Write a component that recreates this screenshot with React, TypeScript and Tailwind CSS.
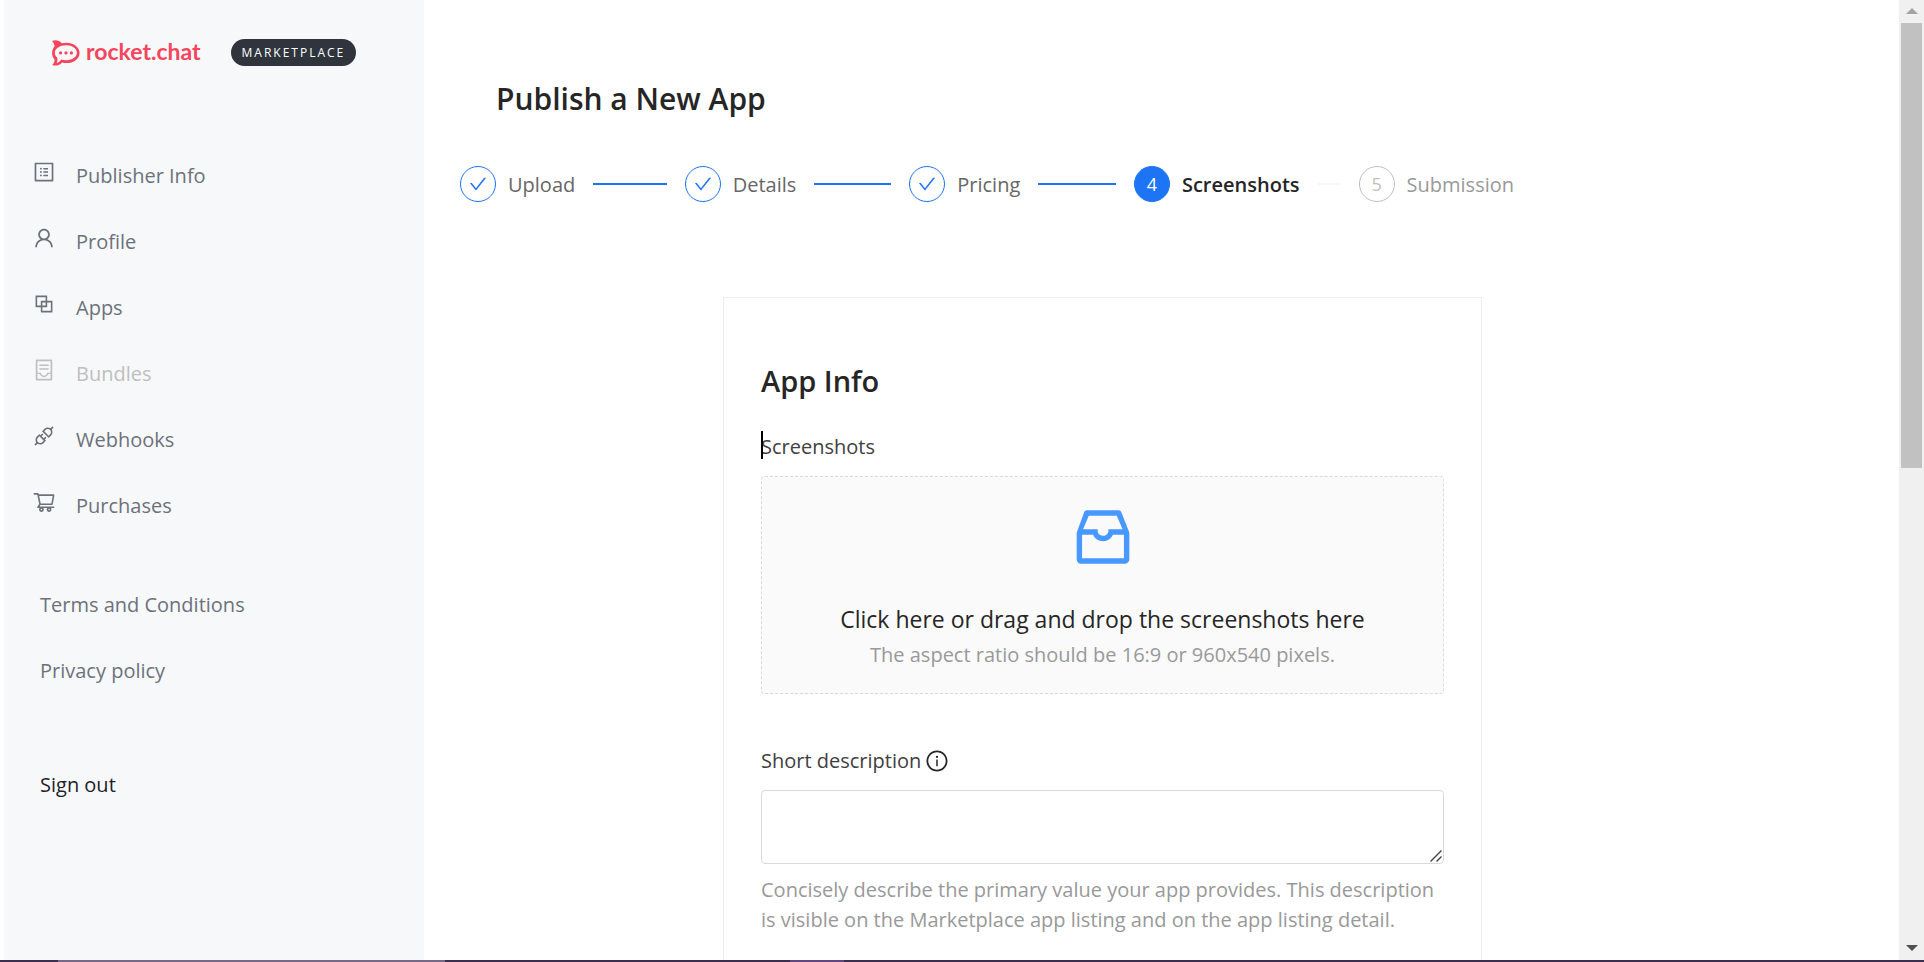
import type { ReactNode } from "react";
import type { IconType } from "react-icons";
import {
  AiOutlineApi,
  AiOutlineBlock,
  AiOutlineCheck,
  AiOutlineContainer,
  AiOutlineInbox,
  AiOutlineInfoCircle,
  AiOutlineProfile,
  AiOutlineShoppingCart,
  AiOutlineUser,
} from "react-icons/ai";

const navItems: { label: string; icon: IconType; disabled?: boolean }[] = [
  { label: "Publisher Info", icon: AiOutlineProfile },
  { label: "Profile", icon: AiOutlineUser },
  { label: "Apps", icon: AiOutlineBlock },
  { label: "Bundles", icon: AiOutlineContainer, disabled: true },
  { label: "Webhooks", icon: AiOutlineApi },
  { label: "Purchases", icon: AiOutlineShoppingCart },
];

type StepStatus = "done" | "current" | "waiting";

const steps: { label: string; status: StepStatus }[] = [
  { label: "Upload", status: "done" },
  { label: "Details", status: "done" },
  { label: "Pricing", status: "done" },
  { label: "Screenshots", status: "current" },
  { label: "Submission", status: "waiting" },
];

const circleStyles: Record<StepStatus, string> = {
  done: "border-[#1d74f5] text-[#1d74f5]",
  current: "border-[#1d74f5] bg-[#1d74f5] text-white",
  waiting: "border-[#bfbfbf] text-[#bfbfbf]",
};

const labelStyles: Record<StepStatus, string> = {
  done: "text-[#666666]",
  current: "font-semibold text-[#262626]",
  waiting: "text-[#999999]",
};

function RocketMark() {
  return (
    <svg viewBox="0 0 28 26" className="h-[26px] w-7 shrink-0" aria-hidden="true">
      <path
        fill="#f5455c"
        d="M0 .9C3.6-.3 7.400 .5 9.600 3.200 11.200 2.900 12.600 2.700 14.200 2.700 21.800 2.700 27.600 7.100 27.600 12.900S21.800 23.100 14.200 23.100C12.700 23.100 11.300 22.900 10 22.500 7.700 25.600 3.700 26.300 .2 25 2 23.300 2.700 21.400 2.400 19.300 .9 17.500 .1 15.300 .1 12.900 .1 10.500 1 8.300 2.500 6.600 2.600 4.500 1.800 2.500 0 .9Z"
      />
      <path
        fill="#f7f8fa"
        d="M14.200 5.300C20.200 5.300 24.900 8.600 24.900 12.800S20.200 20.200 14.200 20.200C12.400 20.200 10.700 19.900 9.200 19.400 8 21.100 6.700 22.300 4.700 22.900 5.600 21.200 5.600 19.500 5.200 17.600 3.500 16.100 2.800 14.600 2.800 12.700 2.800 8.600 8 5.300 14.200 5.300Z"
      />
      <g fill="#f5455c">
        <circle cx="8.600" cy="12.900" r="1.600" />
        <circle cx="14" cy="12.900" r="1.600" />
        <circle cx="19.400" cy="12.900" r="1.600" />
      </g>
    </svg>
  );
}

function Sidebar() {
  return (
    <aside className="w-[420px] shrink-0 bg-[#f7f8fa] text-xl leading-[30px] text-[#6c727a]">
      <div className="flex items-center pt-[39px] pl-12">
        <a href="#home" className="flex items-center gap-1.5 text-[#f5455c]">
          <RocketMark />
          <span className="pb-1 font-[Lato,sans-serif] text-[23px] leading-[22px] font-bold">rocket.chat</span>
        </a>
        <span className="ml-[30px] rounded-full bg-[#2f343d] px-[11px] text-xs leading-[27px] tracking-[2px] text-white">
          MARKETPLACE
        </span>
      </div>
      <nav aria-label="Main" className="pt-[94px]">
        <ul className="flex flex-col gap-9 pl-7">
          {navItems.map(({ label, icon: Icon, disabled }) => (
            <li key={label}>
              <a
                href={"#" + label.toLowerCase().replace(" ", "-")}
                aria-disabled={disabled}
                className={disabled ? "flex gap-5 text-[#bfbfbf]" : "flex gap-5"}
              >
                <Icon className="size-6 shrink-0" />
                <span className="pt-1 pb-0.5 leading-6">{label}</span>
              </a>
            </li>
          ))}
        </ul>
        <ul className="flex flex-col gap-9 pt-[70px] pl-9">
          <li><a href="#terms">Terms and Conditions</a></li>
          <li><a href="#privacy">Privacy policy</a></li>
        </ul>
      </nav>
      <button type="button" className="mt-[84px] ml-9 text-[#1f2329]">Sign out</button>
    </aside>
  );
}

function Stepper() {
  return (
    <ol className="flex max-w-[1054px] text-xl leading-[34px]">
      {steps.map(({ label, status }, index) => (
        <li
          key={label}
          aria-current={status === "current" ? "step" : undefined}
          className={index < steps.length - 1 ? "flex min-w-0 flex-1 items-center" : "flex items-center"}
        >
          <span
            className={`mr-3 flex size-9 shrink-0 items-center justify-center rounded-full border text-lg ${circleStyles[status]}`}
          >
            {status === "done" ? <AiOutlineCheck className="size-5" /> : index + 1}
          </span>
          <span className={`pt-0.5 ${labelStyles[status]}`}>{label}</span>
          {index < steps.length - 1 && (
            <span
              className={status === "done" ? "mx-[18px] h-0.5 flex-1 bg-[#1d74f5]" : "mx-[18px] h-0.5 flex-1 bg-[#f7f7f7]"}
            />
          )}
        </li>
      ))}
    </ol>
  );
}

function Hint({ children }: { children: ReactNode }) {
  return <p className="text-[#999999]">{children}</p>;
}

function AppInfoCard() {
  return (
    <form className="mt-[95px] ml-[263px] max-w-[759px] border border-[#ebedf0] px-[37px] pt-[62px] pb-40 text-xl leading-[30px] text-[#404040]">
      <h2 className="text-[29px] leading-[42px] font-semibold text-[#262626]">App Info</h2>
      <div className="relative mt-[30px]">
        <label htmlFor="screenshots">Screenshots</label>
        <span className="absolute -top-px left-0 h-7 w-0.5 bg-black" />
      </div>
      <button
        id="screenshots"
        type="button"
        className="mt-3.5 flex w-full flex-col items-center rounded border border-dashed border-[#d9d9d9] bg-[#fafafa] pt-6 pb-5"
      >
        <AiOutlineInbox className="size-[72px] text-[#4799ff]" />
        <span className="mt-7 text-[23px] leading-9 text-[#262626]">
          Click here or drag and drop the screenshots here
        </span>
        <span className="leading-9 text-[#999999]">The aspect ratio should be 16:9 or 960x540 pixels.</span>
      </button>
      <div className="mt-[52px] flex items-center gap-1">
        <label htmlFor="short-description">Short description</label>
        <AiOutlineInfoCircle className="size-6 text-[#262626]" />
      </div>
      <div className="relative mt-3.5 mb-[11px]">
        <textarea
          id="short-description"
          className="block h-[74px] w-full resize-none rounded border border-[#d9d9d9] bg-white px-4 py-2 outline-none"
        />
        <svg
          viewBox="0 0 12 12"
          className="pointer-events-none absolute right-0.5 bottom-0.5 size-3"
          fill="none"
          stroke="#404040"
          strokeWidth="1.4"
          aria-hidden="true"
        >
          <path d="M.5 11.500l11-11M6.500 11.500l5-5" />
        </svg>
      </div>
      <Hint>
        Concisely describe the primary value your app provides. This description is visible on the Marketplace app
        listing and on the app listing detail.
      </Hint>
    </form>
  );
}

function ScrollTrack() {
  return (
    <div className="flex w-[25px] shrink-0 flex-col items-center bg-[#f0f0f0]" aria-hidden="true">
      <svg viewBox="0 0 12 6" className="mt-2 h-1.5 w-3 shrink-0 fill-[#a3a3a3]">
        <path d="M6 0l6 6H0z" />
      </svg>
      <div className="mt-[9px] h-[445px] w-[21px] shrink-0 bg-[#c1c1c1]" />
      <svg viewBox="0 0 12 6" className="mt-auto mb-[9px] h-1.5 w-3 shrink-0 fill-[#505050]">
        <path d="M0 0h12L6 6z" />
      </svg>
    </div>
  );
}

export default function App() {
  return (
    <div className="flex h-screen flex-col bg-white font-['Open_Sans','Noto_Sans',sans-serif]">
      <div className="flex min-h-0 flex-1 pl-1">
        <Sidebar />
        <main className="min-w-0 flex-1 overflow-hidden px-9 pt-[75px]">
          <h1 className="pl-9 text-[30px] leading-[48px] font-semibold text-[#262626]">Publish a New App</h1>
          <div className="pt-[43px]">
            <Stepper />
          </div>
          <AppInfoCard />
        </main>
        <ScrollTrack />
      </div>
      <div className="flex h-0.5 shrink-0 bg-[#3b2e4f] pl-[58px]">
        <span className="w-[387px] bg-[#776888]" />
        <span className="ml-[345px] w-[54px] bg-[#62467f]" />
      </div>
    </div>
  );
}
